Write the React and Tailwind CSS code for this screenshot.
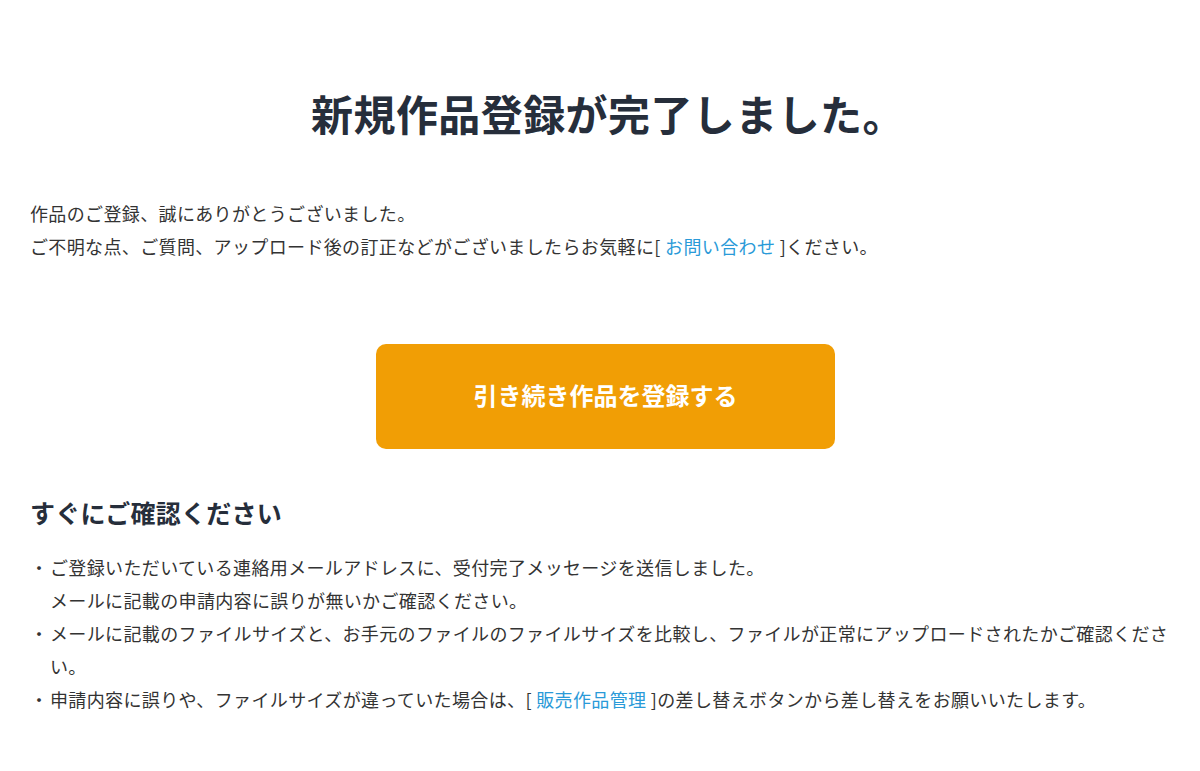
export default function App() {
  const font = { fontFamily: '"Noto Sans CJK JP", "Noto Sans", sans-serif' };
  return (
    <div className="min-h-[771px] bg-white px-[30px] text-[#333333]" style={font}>
      <h1 className="pl-[16px] pt-[83px] text-center text-[42px] font-bold leading-[60px] tracking-[0.01em] text-[#262e3b]">
        新規作品登録が完了しました。
      </h1>

      <div className="mt-[54px] text-[18px] leading-[33px] tracking-[0.02em]">
        <p>作品のご登録、誠にありがとうございました。</p>
        <p>
          ご不明な点、ご質問、アップロード後の訂正などがございましたらお気軽に[{' '}
          <a href="#" className="text-[#2a9ad8]">お問い合わせ</a> ]ください。
        </p>
      </div>

      <div className="mt-[81px] flex justify-center pl-[11px]">
        <button className="flex h-[105px] w-[459px] items-center justify-center rounded-[10px] bg-[#f19e05] pb-[4px] text-[24px] font-bold text-white">
          引き続き作品を登録する
        </button>
      </div>

      <h2 className="mt-[45px] text-[25px] font-bold leading-[36px] tracking-[0.01em] text-[#262e3b]">
        すぐにご確認ください
      </h2>

      <ul className="mt-[21px] text-[18px] leading-[33px] tracking-[0.02em]">
        <li className="relative pl-[20px]">
          <span className="absolute left-0 top-0">・</span>
          ご登録いただいている連絡用メールアドレスに、受付完了メッセージを送信しました。
          <br />
          メールに記載の申請内容に誤りが無いかご確認ください。
        </li>
        <li className="relative pl-[20px]">
          <span className="absolute left-0 top-0">・</span>
          メールに記載のファイルサイズと、お手元のファイルのファイルサイズを比較し、ファイルが正常にアップロードされたかご確認ください。
        </li>
        <li className="relative pl-[20px]">
          <span className="absolute left-0 top-0">・</span>
          申請内容に誤りや、ファイルサイズが違っていた場合は、[{' '}
          <a href="#" className="text-[#2a9ad8]">販売作品管理</a> ]の差し替えボタンから差し替えをお願いいたします。
        </li>
      </ul>
    </div>
  );
}
